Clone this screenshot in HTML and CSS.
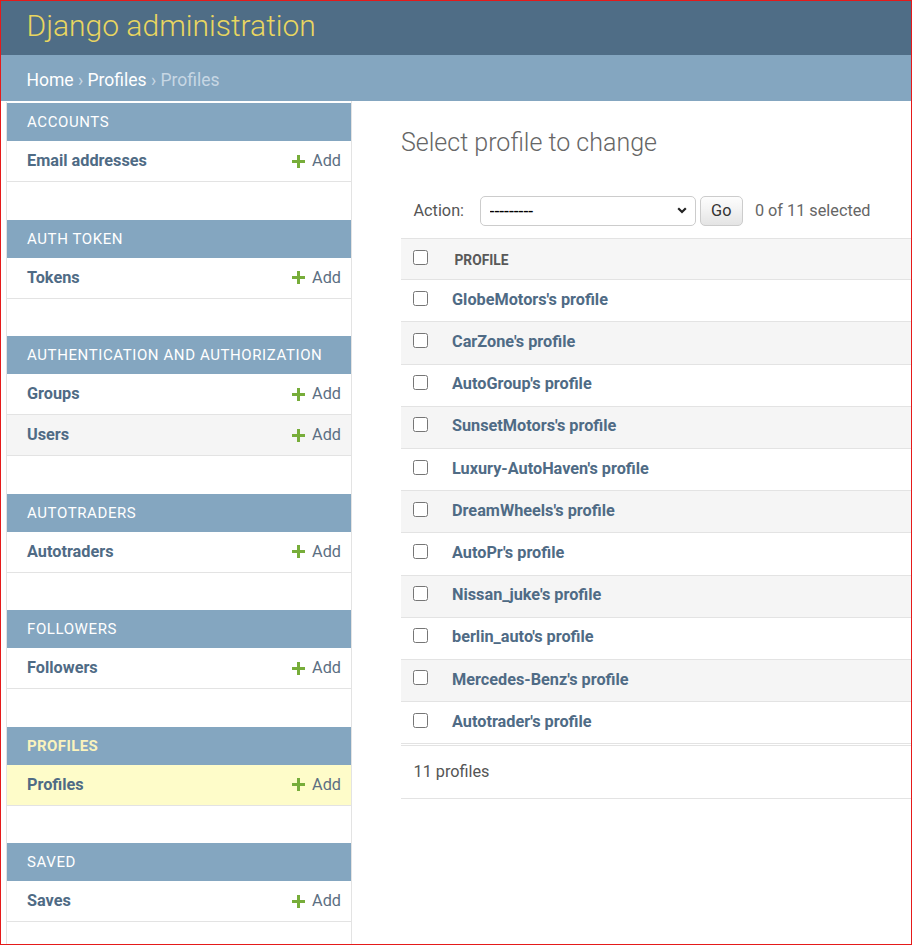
FILE: index.html
```html
<!DOCTYPE html>
<html lang="en">
<head>
<meta charset="utf-8">
<title>Select profile to change | Django site admin</title>
<link rel="stylesheet" href="styles.css">
</head>
<body>
<div class="frame">
  <header class="header">
    <h1 class="branding">Django administration</h1>
  </header>
  <nav class="breadcrumbs"><a href="#">Home</a> › <a href="#">Profiles</a> › Profiles</nav>
  <div class="main">
    <div class="toggle"></div>
    <aside class="sidebar">
      <div class="module">
        <div class="caption">Accounts</div>
        <div class="row"><a class="model" href="#">Email addresses</a><a class="addlink" href="#"><svg class="plus" viewBox="0 0 13 13"><path d="M5 0h3v5h5v3H8v5H5V8H0V5h5z"/></svg>Add</a></div>
      </div>
      <div class="module">
        <div class="caption">Auth Token</div>
        <div class="row"><a class="model" href="#">Tokens</a><a class="addlink" href="#"><svg class="plus" viewBox="0 0 13 13"><path d="M5 0h3v5h5v3H8v5H5V8H0V5h5z"/></svg>Add</a></div>
      </div>
      <div class="module">
        <div class="caption">Authentication and Authorization</div>
        <div class="row"><a class="model" href="#">Groups</a><a class="addlink" href="#"><svg class="plus" viewBox="0 0 13 13"><path d="M5 0h3v5h5v3H8v5H5V8H0V5h5z"/></svg>Add</a></div>
        <div class="row alt"><a class="model" href="#">Users</a><a class="addlink" href="#"><svg class="plus" viewBox="0 0 13 13"><path d="M5 0h3v5h5v3H8v5H5V8H0V5h5z"/></svg>Add</a></div>
      </div>
      <div class="module">
        <div class="caption">Autotraders</div>
        <div class="row"><a class="model" href="#">Autotraders</a><a class="addlink" href="#"><svg class="plus" viewBox="0 0 13 13"><path d="M5 0h3v5h5v3H8v5H5V8H0V5h5z"/></svg>Add</a></div>
      </div>
      <div class="module">
        <div class="caption">Followers</div>
        <div class="row"><a class="model" href="#">Followers</a><a class="addlink" href="#"><svg class="plus" viewBox="0 0 13 13"><path d="M5 0h3v5h5v3H8v5H5V8H0V5h5z"/></svg>Add</a></div>
      </div>
      <div class="module current-app">
        <div class="caption">Profiles</div>
        <div class="row current"><a class="model" href="#">Profiles</a><a class="addlink" href="#"><svg class="plus" viewBox="0 0 13 13"><path d="M5 0h3v5h5v3H8v5H5V8H0V5h5z"/></svg>Add</a></div>
      </div>
      <div class="module">
        <div class="caption">Saved</div>
        <div class="row"><a class="model" href="#">Saves</a><a class="addlink" href="#"><svg class="plus" viewBox="0 0 13 13"><path d="M5 0h3v5h5v3H8v5H5V8H0V5h5z"/></svg>Add</a></div>
      </div>
    </aside>
    <main class="content">
      <h1 class="title">Select profile to change</h1>
      <div class="actions">
        <label class="action-label">Action:</label>
        <span class="select-wrap">
          <select class="action-select"><option>---------</option></select>
          <svg class="chevron" viewBox="0 0 10 7"><path d="M1.2 1.2L5 5l3.8-3.8"/></svg>
        </span>
        <button class="go" type="button">Go</button>
        <span class="counter">0 of 11 selected</span>
      </div>
      <table class="results">
        <thead>
          <tr><th class="cb"><input type="checkbox"></th><th class="col">Profile</th></tr>
        </thead>
        <tbody>
          <tr><td class="cb"><input type="checkbox"></td><td class="name"><a href="#">GlobeMotors's profile</a></td></tr>
          <tr class="even"><td class="cb"><input type="checkbox"></td><td class="name"><a href="#">CarZone's profile</a></td></tr>
          <tr><td class="cb"><input type="checkbox"></td><td class="name"><a href="#">AutoGroup's profile</a></td></tr>
          <tr class="even"><td class="cb"><input type="checkbox"></td><td class="name"><a href="#">SunsetMotors's profile</a></td></tr>
          <tr><td class="cb"><input type="checkbox"></td><td class="name"><a href="#">Luxury-AutoHaven's profile</a></td></tr>
          <tr class="even"><td class="cb"><input type="checkbox"></td><td class="name"><a href="#">DreamWheels's profile</a></td></tr>
          <tr><td class="cb"><input type="checkbox"></td><td class="name"><a href="#">AutoPr's profile</a></td></tr>
          <tr class="even"><td class="cb"><input type="checkbox"></td><td class="name"><a href="#">Nissan_juke's profile</a></td></tr>
          <tr><td class="cb"><input type="checkbox"></td><td class="name"><a href="#">berlin_auto's profile</a></td></tr>
          <tr class="even"><td class="cb"><input type="checkbox"></td><td class="name"><a href="#">Mercedes-Benz's profile</a></td></tr>
          <tr><td class="cb"><input type="checkbox"></td><td class="name"><a href="#">Autotrader's profile</a></td></tr>
        </tbody>
      </table>
      <p class="paginator">11 profiles</p>
    </main>
  </div>
</div>
</body>
</html>
```
FILE: styles.css
```css
* { box-sizing: border-box; }
html, body { margin: 0; padding: 0; background: #fff; }
body { font-family: Roboto, "Liberation Sans", sans-serif; color: #333; }
a { text-decoration: none; }

.frame {
  width: 912px;
  height: 945px;
  border: 1px solid #e51a1a;
  overflow: hidden;
  display: flex;
  flex-direction: column;
}

.header { flex: none; background: #4f6d86; padding: 7px 25.5px 11px; }
.branding { margin: 0; font-size: 30px; font-weight: 300; line-height: 36px; color: #e9d660; white-space: nowrap; }

.breadcrumbs { flex: none; background: #84a6c0; padding: 14.5px 25.5px 10.5px; font-size: 17.5px; line-height: 21px; color: #c7d7e4; }
.breadcrumbs a { color: #fff; }

.main { flex: 1; display: flex; min-height: 0; }
.toggle { flex: 0 0 6px; border-right: 1px solid #e3e3e3; margin-top: 1px; }
.sidebar { flex: 0 0 345px; border-right: 1px solid #e3e3e3; padding-top: 2px; }

.module { margin-bottom: 37.5px; }
.caption {
  background: #84a6c0; color: #fff;
  font-size: 15px; line-height: 18px; letter-spacing: 0.6px;
  padding: 10px 20px;
  text-transform: uppercase; white-space: nowrap;
}
.current-app .caption { color: #faf3bd; font-weight: 700; letter-spacing: 0.4px; }
.row {
  display: flex; justify-content: space-between; align-items: center;
  padding: 10px 10px 10px 20px;
  font-size: 16.25px; line-height: 20px;
  border-bottom: 1px solid #e3e3e3;
}
.row.alt { background: #f5f5f5; }
.row.current { background: #fefcc9; }
.model { font-weight: 700; color: #4f6b85; }
.addlink { display: flex; align-items: center; gap: 7.5px; color: #5c6f82; }
.plus { width: 13px; height: 13px; fill: #77ad3a; }

.content { flex: 1; min-width: 0; padding: 27px 0 0 49px; }
.title { margin: 0 0 26px; font-size: 25px; font-weight: 300; line-height: 29.3px; color: #666; white-space: nowrap; }

.actions { display: flex; align-items: center; padding: 12.5px; height: 55px; white-space: nowrap; }
.action-label { font-size: 16.25px; color: #555; margin-right: 15.5px; }
.select-wrap { position: relative; display: block; width: 216px; height: 30px; }
.action-select {
  display: block; width: 216px; height: 30px; margin: 0;
  appearance: none; -webkit-appearance: none;
  border: 1px solid #ccc; border-radius: 5px; background: #fff;
  font-family: inherit; font-size: 17.5px; color: #000; padding: 0 0 0 9px;
}
.chevron {
  position: absolute; right: 9px; top: 11px; width: 10px; height: 7px;
  fill: none; stroke: #222; stroke-width: 2.2; pointer-events: none;
}
.go {
  margin-left: 4px; height: 30px; padding: 0 10.5px;
  border: 1px solid #ccc; border-radius: 5px;
  background: linear-gradient(#fdfdfd 0%, #f4f4f4 40%, #e4e4e4 100%);
  font-family: inherit; font-size: 16.25px; color: #333;
}
.counter { margin-left: 12px; font-size: 16.25px; color: #666; }

.results { width: 100%; border-collapse: collapse; }
.results th, .results td { text-align: left; vertical-align: top; }
.results thead th {
  background: #f6f6f6;
  border-top: 1px solid #e3e3e3; border-bottom: 1px solid #e3e3e3;
  padding: 11px 12.5px 9px; line-height: 20px;
  font-size: 13.75px; font-weight: 700; color: #595959; text-transform: uppercase;
}
.results thead th.cb { width: 41px; padding: 11px 0 0; }
.results .cb input { display: block; width: 15px; height: 15px; margin: 0 auto 0 12px; }
.results td { border-bottom: 1px solid #e3e3e3; padding: 8.6px 10px 11.4px; line-height: 21.2px; font-size: 16.25px; }
.results td.cb { width: 41px; padding: 10.5px 0 0; }
.results tr.even td { background: #f5f5f5; }
.name a { font-weight: 700; color: #4f6b85; }

.paginator {
  margin: 1px 0 0; padding: 11.5px 12.5px 13.5px; line-height: 27px;
  border-top: 1px solid #e3e3e3; border-bottom: 1px solid #e3e3e3;
  font-size: 16.25px; color: #555;
}
```
